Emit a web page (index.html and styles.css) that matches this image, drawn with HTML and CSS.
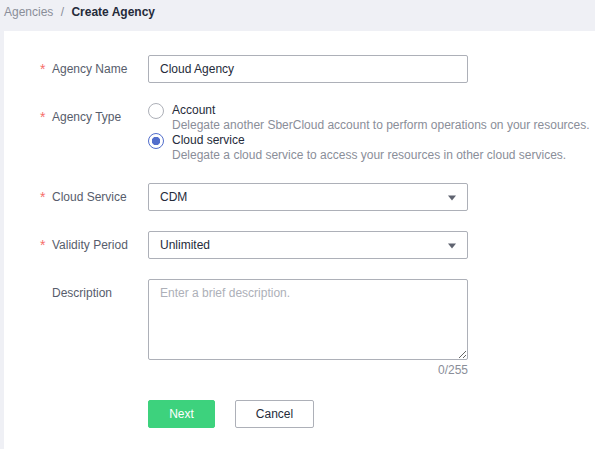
FILE: index.html
```html
<!DOCTYPE html>
<html lang="en">
<head>
    <meta charset="UTF-8">
    <meta name="viewport" content="width=device-width, initial-scale=1.0">
    <title>Create Agency</title>
    <link rel="stylesheet" href="styles.css">
</head>
<body>

    <div class="crumbs">
        <span class="crumb-link">Agencies</span>
        <span class="crumb-sep">/</span>
        <span class="crumb-current">Create Agency</span>
    </div>

    <div class="card">
        <div class="row">
            <label class="label"><span class="star">*</span>Agency Name</label>
            <div class="field">
                <input class="input" type="text" value="Cloud Agency">
            </div>
        </div>

        <div class="row">
            <label class="label"><span class="star">*</span>Agency Type</label>
            <div class="field radios">
                <div class="radio">
                    <span class="dot"></span>
                    <div>
                        <div class="radio-title">Account</div>
                        <div class="radio-desc">Delegate another SberCloud account to perform operations on your resources.</div>
                    </div>
                </div>
                <div class="radio">
                    <span class="dot checked"></span>
                    <div>
                        <div class="radio-title">Cloud service</div>
                        <div class="radio-desc">Delegate a cloud service to access your resources in other cloud services.</div>
                    </div>
                </div>
            </div>
        </div>

        <div class="row">
            <label class="label"><span class="star">*</span>Cloud Service</label>
            <div class="field">
                <div class="select">
                    <span>CDM</span>
                    <svg width="10" height="6" viewBox="0 0 10 6"><path d="M1 0.5 L9 0.5 L5 5.5 Z" fill="#5f6370"/></svg>
                </div>
            </div>
        </div>

        <div class="row">
            <label class="label"><span class="star">*</span>Validity Period</label>
            <div class="field">
                <div class="select">
                    <span>Unlimited</span>
                    <svg width="10" height="6" viewBox="0 0 10 6"><path d="M1 0.5 L9 0.5 L5 5.5 Z" fill="#5f6370"/></svg>
                </div>
            </div>
        </div>

        <div class="row">
            <label class="label"><span class="star"></span>Description</label>
            <div class="field">
                <textarea class="textarea" placeholder="Enter a brief description."></textarea>
                <div class="counter">0/255</div>
            </div>
        </div>

        <div class="actions">
            <button class="btn btn-primary">Next</button>
            <button class="btn">Cancel</button>
        </div>
    </div>

</body>
</html>
```

FILE: styles.css
```css
body {
    font-family: 'Liberation Sans', Arial, sans-serif;
    font-size: 12px;
    margin: 0;
    padding: 0;
    background-color: #eff0f5;
    color: #252b3a;
}

.crumbs {
    height: 31px;
    padding-left: 4px;
    line-height: 24px;
}

.crumb-link {
    color: #8a8e99;
}

.crumb-sep {
    color: #8a8e99;
    margin: 0 4px;
}

.crumb-current {
    font-weight: bold;
    color: #252b3a;
}

.card {
    margin-left: 4px;
    background-color: #fff;
    padding: 24px 0 22px 36px;
    min-height: 380px;
}

.row {
    display: flex;
    margin-bottom: 20px;
}

.label {
    width: 108px;
    line-height: 28px;
    color: #575d6c;
    flex-shrink: 0;
}

.star {
    display: inline-block;
    width: 12px;
    color: #f66f6a;
    font-size: 14px;
    vertical-align: -1px;
}

.field {
    width: 320px;
}

.input,
.select,
.textarea {
    box-sizing: border-box;
    width: 320px;
    border: 1px solid #adb0b8;
    border-radius: 2px;
    font-family: inherit;
    font-size: 12px;
    color: #252b3a;
    background: #fff;
}

.input {
    height: 28px;
    padding: 0 11px;
    outline: none;
}

.select {
    height: 28px;
    padding: 0 10px 0 11px;
    display: flex;
    align-items: center;
    justify-content: space-between;
}

.select svg {
    margin-top: 1px;
}

.textarea {
    display: block;
    height: 81px;
    padding: 6px 11px;
    resize: vertical;
    outline: none;
}

.textarea::placeholder {
    color: #adb0b8;
}

.counter {
    text-align: right;
    color: #8a8e99;
    line-height: 20px;
}

.radios {
    width: auto;
}

.radio {
    display: flex;
    align-items: flex-start;
    line-height: 15px;
}

.dot {
    box-sizing: border-box;
    width: 16px;
    height: 16px;
    border: 1px solid #adb0b8;
    border-radius: 50%;
    margin: 0 8px 0 0;
    flex-shrink: 0;
}

.dot.checked {
    border-color: #526ecc;
    background: radial-gradient(circle, #526ecc 0, #526ecc 4px, #fff 4.5px);
}

.radio-title {
    color: #252b3a;
}

.radio-desc {
    color: #8a8e99;
}

.actions {
    display: flex;
    gap: 20px;
    margin-left: 108px;
}

.btn {
    box-sizing: border-box;
    height: 28px;
    min-width: 79px;
    padding: 0 16px;
    border: 1px solid #adb0b8;
    border-radius: 2px;
    background: #fff;
    color: #252b3a;
    font-family: inherit;
    font-size: 12px;
    cursor: pointer;
}

.btn-primary {
    min-width: 67px;
    border-color: #3dd27d;
    background-color: #3dd27d;
    color: #fff;
}
```
